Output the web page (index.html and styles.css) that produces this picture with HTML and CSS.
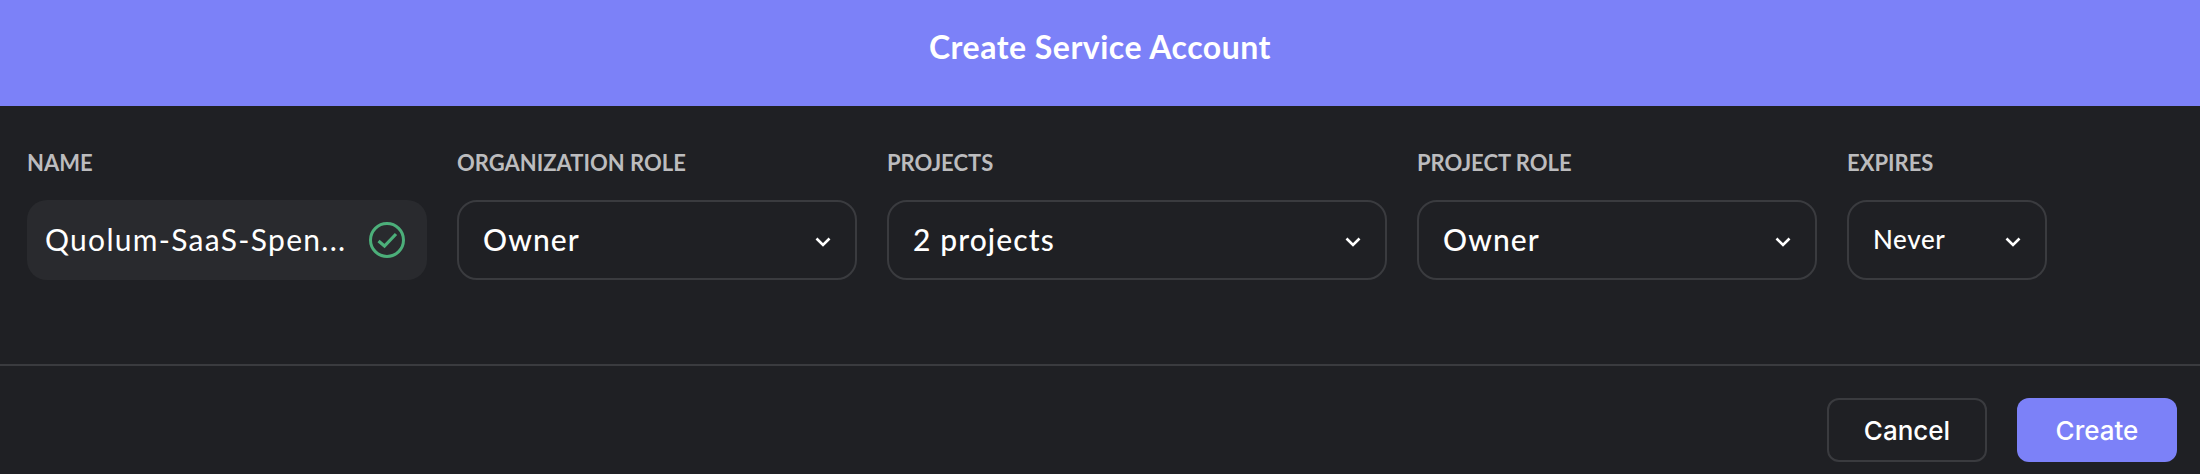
FILE: index.html
```html
<!DOCTYPE html>
<html lang="en">
<head>
<meta charset="utf-8">
<title>Create Service Account</title>
<link rel="stylesheet" href="styles.css">
</head>
<body>
<div class="dialog">
  <header class="head">Create Service Account</header>
  <main class="form">
    <div class="field f-name">
      <label class="lbl">NAME</label>
      <div class="box box-name">
        <span class="val-name">Quolum-SaaS-Spen...</span>
        <svg class="check" width="36" height="36" viewBox="0 0 36 36" fill="none" stroke="#4caf7a"><circle cx="18" cy="18" r="16.5" stroke-width="3"/><path d="M9.5 19l6 5L27 12" stroke-width="3.2"/></svg>
      </div>
    </div>
    <div class="field f-role">
      <label class="lbl">ORGANIZATION ROLE</label>
      <div class="box box-sel"><span class="val">Owner</span><svg class="chev" width="16" height="10" viewBox="0 0 16 10" fill="none" stroke="#fff" stroke-width="2.6"><path d="M1.5 1.5L8 8l6.5-6.5"/></svg></div>
    </div>
    <div class="field f-proj">
      <label class="lbl">PROJECTS</label>
      <div class="box box-sel"><span class="val">2 projects</span><svg class="chev" width="16" height="10" viewBox="0 0 16 10" fill="none" stroke="#fff" stroke-width="2.6"><path d="M1.5 1.5L8 8l6.5-6.5"/></svg></div>
    </div>
    <div class="field f-role">
      <label class="lbl">PROJECT ROLE</label>
      <div class="box box-sel"><span class="val">Owner</span><svg class="chev" width="16" height="10" viewBox="0 0 16 10" fill="none" stroke="#fff" stroke-width="2.6"><path d="M1.5 1.5L8 8l6.5-6.5"/></svg></div>
    </div>
    <div class="field f-exp">
      <label class="lbl">EXPIRES</label>
      <div class="box box-sel box-small"><span class="val val-small">Never</span><svg class="chev" width="16" height="10" viewBox="0 0 16 10" fill="none" stroke="#fff" stroke-width="2.6"><path d="M1.5 1.5L8 8l6.5-6.5"/></svg></div>
    </div>
  </main>
  <footer class="foot">
    <button class="btn btn-ghost">Cancel</button>
    <button class="btn btn-primary">Create</button>
  </footer>
</div>
</body>
</html>
```
FILE: styles.css
```css
* { box-sizing: border-box; }
html, body { margin: 0; height: 100%; }
body { background: #1f2024; font-family: Lato, "Liberation Sans", sans-serif; color: #fff; }
.dialog { height: 474px; display: flex; flex-direction: column; }
.head { height: 106px; padding-bottom: 14px; background: #7c81f8; display: flex; align-items: center; justify-content: center; font-size: 32px; font-weight: 700; letter-spacing: 0.5px; }
.form { height: 260px; padding: 48px 27px 0; display: flex; gap: 30px; border-bottom: 2px solid #3a3b3f; }
.field { display: flex; flex-direction: column; }
.f-name, .f-role { width: 400px; }
.f-proj { width: 500px; }
.f-exp { width: 200px; }
.lbl { height: 18px; line-height: 18px; font-size: 22px; font-weight: 700; color: #bcbcbe; margin-bottom: 28px; }
.box { height: 80px; border-radius: 20px; display: flex; align-items: center; justify-content: space-between; }
.box-name { background: #292a2e; padding: 0 22px 2px 18px; }
.box-sel { border: 2px solid #3a3b3f; padding: 0 24px 0 24px; }
.box-small { padding-right: 24px; }
.val-name { font-size: 30px; letter-spacing: 1.3px; }
.val { font-size: 30px; font-weight: 500; letter-spacing: 1.1px; margin-bottom: 2px; }
.val-small { font-size: 26px; letter-spacing: 0.6px; }
.chev { margin-top: 4px; }
.check { flex: none; margin-top: 2px; }
.foot { flex: 1; display: flex; justify-content: flex-end; gap: 30px; padding: 32px 23px 0 0; }
.btn { width: 160px; height: 64px; border-radius: 12px; font-family: Inter, sans-serif; font-size: 26px; font-weight: 500; color: #fff; }
.btn-ghost { background: transparent; border: 2px solid #3a3b3f; }
.btn-primary { background: #7c81f8; border: 0; }
```
